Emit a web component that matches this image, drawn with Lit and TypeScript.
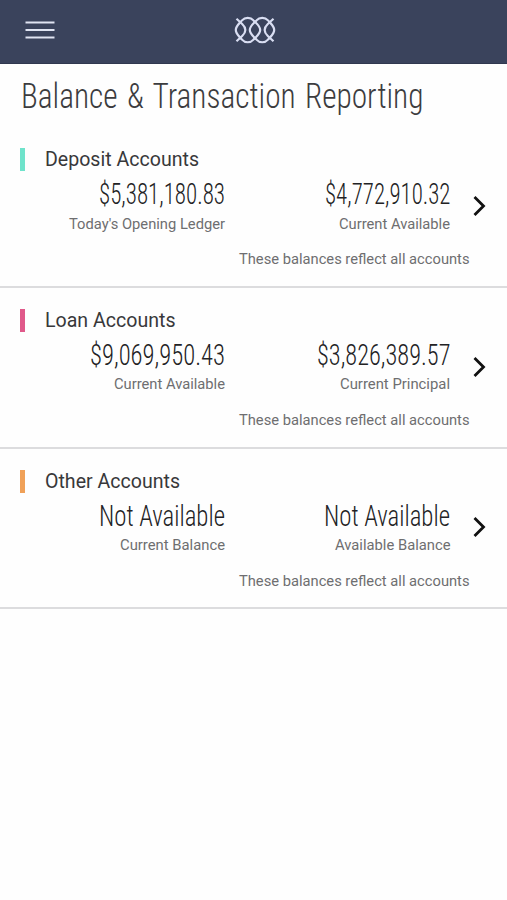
import { LitElement, html, svg, css } from "lit";
import { customElement, property } from "lit/decorators.js";

interface Balance { text: string; width: number; label: string; labelWidth: number }
interface Account { name: string; nameWidth: number; tone: string; balances: Balance[] }

const accounts: Account[] = [
  { name: "Deposit Accounts", nameWidth: 154, tone: "mint", balances: [
    { text: "$5,381,180.83", width: 126, label: "Today's Opening Ledger", labelWidth: 156 },
    { text: "$4,772,910.32", width: 125.5, label: "Current Available", labelWidth: 111 } ] },
  { name: "Loan Accounts", nameWidth: 130.5, tone: "rose", balances: [
    { text: "$9,069,950.43", width: 135, label: "Current Available", labelWidth: 111 },
    { text: "$3,826,389.57", width: 133.5, label: "Current Principal", labelWidth: 110 } ] },
  { name: "Other Accounts", nameWidth: 135, tone: "amber", balances: [
    { text: "Not Available", width: 126, label: "Current Balance", labelWidth: 105 },
    { text: "Not Available", width: 126, label: "Available Balance", labelWidth: 115.5 } ] },
];

/* A single line of text fitted to a given width. */
@customElement("fit-text")
class FitText extends LitElement {
  @property() text = "";
  @property({ type: Number }) width = 100;
  @property({ type: Number }) size = 16;
  static styles = css`
    :host { display: block; }
    svg { display: block; overflow: visible; }
    text { fill: currentColor; font-family: Roboto, "Liberation Sans", sans-serif; }
  `;
  render() {
    const h = Math.round(this.size * 1.2);
    return html`<svg width=${this.width} height=${h}>${svg`<text x="0" y=${this.size * 0.95}
      font-size=${this.size} textLength=${this.width} lengthAdjust="spacingAndGlyphs">${this.text}</text>`}</svg>`;
  }
}

@customElement("account-row")
class AccountRow extends LitElement {
  @property({ attribute: false }) account!: Account;
  static styles = css`
    :host { display: block; box-sizing: border-box; height: 160.7px; border-bottom: 2px solid #dcdcde; padding-top: 21px; }
    .head { display: flex; align-items: center; gap: 20px; padding-left: 20px; height: 23px; color: #38383a; }
    .mark { width: 5px; height: 23px; }
    .mint { background: #6fe3cb; }
    .rose { background: #e0598a; }
    .amber { background: #f0a158; }
    .body { display: grid; grid-template-columns: 225px 225px 1fr; align-items: center; margin-top: 5px; }
    .balance { display: flex; flex-direction: column; align-items: flex-end; gap: 3.5px; }
    .amount { color: #222224; font-weight: 340; font-stretch: 75%; }
    .label { color: #6e6e70; }
    .arrow { display: block; margin: 3px 0 0 22px; }
    .note { display: flex; justify-content: flex-end; padding-right: 38px; margin-top: 17.5px; color: #6e6e70; }
  `;
  render() {
    const a = this.account;
    return html`
      <div class="head"><div class="mark ${a.tone}"></div>
        <fit-text .text=${a.name} .width=${a.nameWidth} .size=${19.3}></fit-text></div>
      <div class="body">
        ${a.balances.map((b) => html`<div class="balance">
          <fit-text class="amount" .text=${b.text} .width=${b.width} .size=${29.5}></fit-text>
          <fit-text class="label" .text=${b.label} .width=${b.labelWidth} .size=${14.6}></fit-text>
        </div>`)}
        <svg class="arrow" width="15" height="22" viewBox="0 0 15 22" fill="none" stroke="#111" stroke-width="2.8">
          <path d="M2.5 2 L11.5 11 L2.5 20" /></svg>
      </div>
      <div class="note"><fit-text .text=${"These balances reflect all accounts"} .width=${230.5} .size=${14.6}></fit-text></div>`;
  }
}

@customElement("app-root")
class AppRoot extends LitElement {
  static styles = css`
    :host { display: block; min-height: 900px; background: #fefefe; }
    header { display: grid; grid-template-columns: 1fr auto 1fr; align-items: center; box-sizing: border-box;
      height: 64.4px; padding: 0 25px 3px; background: #3a435c; border-bottom: 1px solid #30384f; }
    .menu, .logo { display: block; }
    .logo { margin-left: 3px; }
    .title { height: 62.9px; padding: 9.5px 0 0 21px; box-sizing: border-box; color: #3c3c3e;
      font-weight: 320; font-stretch: 75%; word-spacing: 2.5px; }
  `;
  render() {
    return html`
      <header>
        <svg class="menu" width="30" height="20" viewBox="0 0 30 20" stroke="#dfe4f2" stroke-width="2">
          <path d="M0.5 2.5H29.5M0.5 10H29.5M0.5 17.5H29.5" /></svg>
        <svg class="logo" width="42" height="28" viewBox="0 0 42 28" fill="none" stroke="#d9def2" stroke-width="2.2">
          <path d="M26.2 14 C26.2 10.2 23.5 8.6 19.5 4.4 C16.5 0.9 11 0.9 8 4.4 C5 8 1.8 10 1.8 14 C1.8 18 5 20 8 23.6 C11 27.1 16.5 27.1 19.5 23.6 C23.5 19.4 26.2 17.8 26.2 14Z" />
          <path d="M15.8 14 C15.8 10.2 18.5 8.6 22.5 4.4 C25.5 0.9 31 0.9 34 4.4 C37 8 40.2 10 40.2 14 C40.2 18 37 20 34 23.6 C31 27.1 25.5 27.1 22.5 23.6 C18.5 19.4 15.8 17.8 15.8 14Z" />
          <path d="M2.5 2.7 L8.2 8 C12.4 12 12.4 16 8.2 20 L2.5 25.3" />
          <path d="M39.5 2.7 L33.8 8 C29.6 12 29.6 16 33.8 20 L39.5 25.3" />
        </svg>
      </header>
      <div class="title"><fit-text .text=${"Balance & Transaction Reporting"} .width=${402.5} .size=${35.5}></fit-text></div>
      ${accounts.map((a) => html`<account-row .account=${a}></account-row>`)}`;
  }
}
